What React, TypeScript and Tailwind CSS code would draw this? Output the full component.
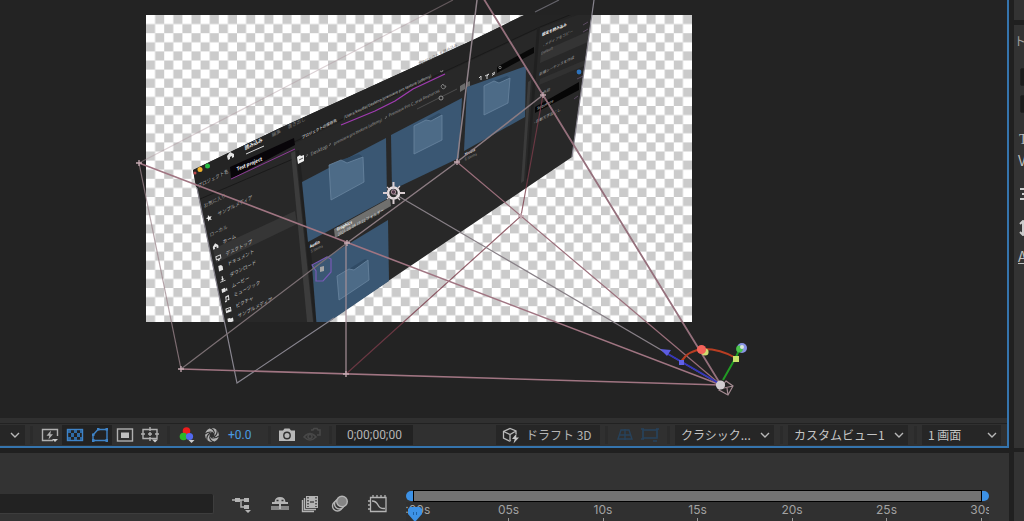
import React from "react";

type Pt = [number, number];
const pts = (p: Pt[]) => p.map((q) => q.join(",")).join(" ");

type SlantProps = { x: number; y: number; size?: number; fill?: string; bold?: boolean; slope?: number; lean?: number; children: string };

function Slant({ x, y, size = 5, fill = "#b4b4b4", bold, slope = -0.5, lean = 0.15, children }: SlantProps) {
  return (
    <text
      transform={`matrix(0.88 ${slope * 0.88} ${lean} 0.97 ${x} ${y})`}
      fontSize={size}
      fontWeight={bold ? 700 : 400}
      fill={fill}
    >
      {children}
    </text>
  );
}

const cells: Pt[][] = [
  [[302, 182], [386, 138], [387, 199], [308, 242]],
  [[391, 135], [462, 98], [459, 158], [392, 190]],
  [[467, 87], [526, 66], [525, 117], [464, 151]],
  [[312, 266], [388, 220], [389, 281], [317, 330]],
];

const folders: { notch: Pt[]; body: Pt[] }[] = [
  { notch: [[341, 160], [359, 154], [363, 157], [347, 163]], body: [[329, 165], [341, 160], [347, 163], [363, 157], [364, 182], [331, 200]] },
  { notch: [[426, 120], [439, 113], [442, 115], [431, 121]], body: [[414, 126], [426, 120], [431, 121], [442, 115], [442, 140], [414, 154]] },
  { notch: [[494, 81], [507, 76], [510, 78], [499, 83]], body: [[484, 86], [494, 81], [499, 83], [510, 78], [508, 103], [484, 115]] },
  { notch: [[349, 269], [365, 259], [368, 260], [354, 270]], body: [[337, 276], [349, 269], [354, 270], [368, 260], [369, 280], [339, 300]] },
];

const places: { label: string; x: number; y: number; icon: string }[] = [
  { label: "ホーム", x: 223, y: 243, icon: "M-3 0L0 -3L3 0V3H1V1H-1V3H-3Z" },
  { label: "デスクトップ", x: 226, y: 255, icon: "M-3 -3H3V1.5H1V3H-1V1.5H-3ZM-2 -2V.5H2V-2Z" },
  { label: "ドキュメント", x: 228, y: 265, icon: "M-2 -3H1L2.5 -1V3H-2Z" },
  { label: "ダウンロード", x: 230, y: 276, icon: "M-.6 -3H.6V0H2L0 2L-2 0H-.6ZM-3 2H3V3H-3Z" },
  { label: "ムービー", x: 232, y: 287, icon: "M-3 -2H1V0L3 -1.5V2L1 1V2H-3Z" },
  { label: "ミュージック", x: 234, y: 296, icon: "M-1 -3L3 -3.5V2H1V.5H2V-2L0 -1.5V3H-2V1.5H-1Z" },
  { label: "ピクチャ", x: 236, y: 307, icon: "M-3 -2.5H3V2.5H-3ZM-2 -1.5V.5L0 -.5L2 .5V-1.5Z" },
  { label: "サンプルメディア", x: 238, y: 317, icon: "M-3 -2.5H-.5L.5 -1.5H3V2.5H-3Z" },
];

function ImportWindow() {
  return (
    <g clipPath="url(#frame)">
      <polygon points="193,170 280,128 473,40 520,17 562,-2 594,-2 572,157 237,383" fill="#282828" />
      <polygon points="193,170 280,128 473,40 520,17 562,-2 594,-2 592,10 540,28 300,141 196,187" fill="#242424" />
      <path d="M196 186L296 141L540 27L592 6M200 199L300 156" stroke="#1a1a1a" fill="none" />
      <circle cx="195" cy="173" r="1.5" fill="#b9484a" />
      <circle cx="200" cy="169.5" r="2.5" fill="#f1b32d" />
      <circle cx="207.5" cy="166" r="2.5" fill="#2bbb43" />
      <path d="M227 156L230 152L234 154V157L232 158V156L230 157V159L228 160Z" fill="#e4e4e4" />
      <Slant x={245} y={150} fill="#eee" bold>読み込み</Slant>
      <path d="M246 154L264 146" stroke="#ddd" strokeWidth="1" />
      <Slant x={272} y={137} fill="#777">編集</Slant>
      <Slant x={288} y={129} fill="#777">書き出し</Slant>
      <Slant x={418} y={66} size={4} fill="#707070">プロジェクト を読み込み</Slant>

      <Slant x={198} y={188}>プロジェクト名</Slant>
      <polygon points="230,167 294,138 295,145 231,179" fill="#080509" />
      <path d="M231 179L295 149" stroke="#8d3b96" strokeWidth="1" />
      <Slant x={237} y={171} fill="#fff" bold slope={-0.42}>Test project</Slant>
      <Slant x={302} y={139} size={4} bold>プロジェクトの保存先</Slant>
      <Slant x={344} y={119} size={4} fill="#c9c9c9" slope={-0.48}>/Users/koudai/Desktop/premiere pro texture (udemy)</Slant>
      <path d="M341 125L375 111L395 101L413 89L445 74" fill="none" stroke="#a03bb0" strokeWidth="1.300" />
      <path d="M440 71L442 72L443 70" fill="none" stroke="#999" strokeWidth=".8" />

      <polygon points="213,249 295,211 297,224 216,263" fill="#363636" />
      <polygon points="291,153 295,151 314,330 308,332" fill="#3c3c3c" />
      <polygon points="296,151 299,150 320,330 315,332" fill="#202020" />
      <Slant x={204} y={208} fill="#999">お気に入り</Slant>
      <path transform="translate(209 218) rotate(-20) scale(.9)" d="M0 -3.500L1 -1L3.500 -1L1.500 .7L2.200 3.300L0 1.800L-2.200 3.300L-1.500 .7L-3.500 -1H-1Z" fill="#eee" />
      <Slant x={218} y={216}>サンプルメディア</Slant>
      <Slant x={210} y={237} fill="#999">ローカル</Slant>
      {places.map((p) => (
        <g key={p.y}>
          <path transform={`matrix(0.9 -0.36 0.14 0.9 ${p.x - 7.5} ${p.y + 3})`} d={p.icon} fill="#e4e4e4" fillRule="evenodd" />
          <Slant x={p.x} y={p.y + 1} fill="#c4c4c4">{p.label}</Slant>
        </g>
      ))}

      <path d="M297 157L300 155L301 156L304 155V161L298 164Z" fill="#f0f0f0" />
      <path d="M299 160L303 158" stroke="#555" strokeWidth="1" />
      <path d="M306 157L307.500 155L307 154M329 146L330.500 144L330 143M385 119L386.500 117L386 116" stroke="#888" strokeWidth=".7" fill="none" />
      <Slant x={311} y={156} fill="#999">Desktop</Slant>
      <Slant x={334} y={145} size={4} fill="#a4a4a4">premiere pro texture (udemy)</Slant>
      <Slant x={389} y={117} size={4} fill="#a4a4a4">Premiere Pro C_ersa Resources</Slant>
      <path d="M417 109L457 89" stroke="#4c4c4c" />
      <circle cx="441" cy="98" r="2" fill="#282828" stroke="#aaa" strokeWidth=".8" />
      <path d="M443 84L444 86L446 86L445 88L443 89L441.500 87.500L441 86Z" stroke="#999" strokeWidth=".7" fill="none" />
      <path d="M460 86L465 83V89L460 92ZM466 83L470 81V86L466 88Z" fill="#6c6c6c" />
      <path d="M479 78L481 76V80M485 76L489 74L487 76V79M492 74L495 72M492 75.500L495 73.500" stroke="#ccc" strokeWidth="1" fill="none" />
      <polygon points="497,67 534,47 534,53 497,73" fill="#080808" />
      <circle cx="500" cy="67.5" r="1.200" stroke="#bbb" strokeWidth=".6" fill="none" />

      {cells.map((c, i) => <polygon key={i} points={pts(c)} fill="#3a5773" />)}
      {folders.map((f, i) => (
        <g key={i}>
          <polygon points={pts(f.notch)} fill="#304b65" />
          <polygon points={pts(f.body)} fill="#4d6b87" stroke="#6985a0" strokeWidth=".8" strokeLinejoin="round" />
        </g>
      ))}
      <Slant x={310} y={248} size={4} fill="#fff" bold>Audio</Slant>
      <Slant x={311} y={253} size={4} fill="#888">5 items</Slant>
      <polygon points="334,229 390,198 391,206 335,238" fill="#70706e" />
      <Slant x={337} y={231} size={4} fill="#fff" bold>Graphics</Slant>
      <Slant x={338} y={236} size={4} fill="#ddd" slope={-0.54}>2021-08-04 19:22 フォルダー</Slant>
      <Slant x={465} y={156} size={4} fill="#ddd" bold>Media</Slant>
      <Slant x={465} y={161} size={4} fill="#888">6 items</Slant>
      <path d="M312 265L327 257L331 259L331 272L323 281L316 281L316 271Z" fill="none" stroke="#7759b5" strokeWidth="1.200" />
      <path d="M320 267L324 266V271L320 272Z" fill="#a5a5a5" />

      <polygon points="528,82 531,80 524,181 521,183" fill="#3b3b3b" />
      <polygon points="533,78 537,28 540,27 536,78 528,178 526,179" fill="#202020" />
      <Slant x={542} y={36} size={4} fill="#fff" bold slope={-0.42} lean={-0.1}>設定を読み込み</Slant>
      <Slant x={543} y={47} size={4} fill="#999" lean={-0.1}>› メディアをコピー</Slant>
      <polygon points="541,52 589,31 588,42 540,63" fill="#343434" />
      <Slant x={541} y={55} size={4} fill="#888" lean={-0.1}>Default</Slant>
      <Slant x={539} y={76} size={4} fill="#aaa" lean={-0.1}>新規シーケンスを作成</Slant>
      <polygon points="540,79 585,60 584,66 539,85" fill="#313131" />
      <circle cx="579" cy="72" r="2.400" fill="#2d73bd" />
      <Slant x={543} y={94} size={4} fill="#999" lean={-0.1}>名前</Slant>
      <polygon points="535,107 579,82 579,90 535,113" fill="#060606" />
      <Slant x={537} y={110} size={4} fill="#ddd" lean={-0.1}>Sequence</Slant>
      <Slant x={534} y={124} size={4} fill="#aaa" lean={-0.1}>› 自動文字起こし</Slant>
      <path d="M583 25L588 22M583 32L588 29M577 79L583 76M574 99L578 96" stroke="#5a4a60" />
    </g>
  );
}

function Stage() {
  return (
    <svg viewBox="0 0 1007 418" preserveAspectRatio="xMinYMin slice" className="block h-full w-full" role="img" aria-label="コンポジション">
      <defs>
        <pattern id="checker" x="146" y="15" width="18.200" height="18.200" patternUnits="userSpaceOnUse">
          <rect width="18.200" height="18.200" fill="#fff" />
          <path d="M9.100 0H18.200V9.100H9.100ZM0 9.100H9.100V18.200H0Z" fill="#cbcbcb" />
        </pattern>
        <clipPath id="frame"><rect x="146" y="15" width="546" height="307" /></clipPath>
      </defs>
      <rect x="146" y="15" width="546" height="307" fill="url(#checker)" />
      <ImportWindow />

      <g fill="none" stroke="#88858f" strokeWidth="1.200">
        <path d="M197 188L237 383L334 318" />
        <path d="M594 0L572 157" />
        <path d="M535 12L559 0" stroke="#65646b" />
      </g>
      <g fill="none" strokeWidth="1.200">
        <path d="M139 163L453 0" stroke="#b09aa0" opacity=".45" />
        <path d="M139 163L181 369" stroke="#9c858c" opacity=".75" />
        <path d="M181 369L347 243" stroke="#7c7074" />
        <path d="M347 243L457 162L543 95" stroke="#8c7c82" strokeWidth="1.500" />
        <path d="M346 243V374" stroke="#a58f97" />
        <path d="M457 162L477 0" stroke="#8f8289" strokeWidth="1.500" />
        <path d="M543 95L521 216L346 374" stroke="#7b3c4a" opacity=".8" />
        <path d="M393 193L721 385" stroke="#888087" />
        <path d="M457 162L721 385" stroke="#9b6f7b" />
        <path d="M482 -4L543 95L721 385" stroke="#95707c" strokeWidth="1.800" />
        <path d="M139 163L721 385" stroke="#a07582" strokeWidth="1.600" />
        <path d="M181 369L721 385" stroke="#a07582" strokeWidth="1.600" />
      </g>
      <path d="M136 163H142M139 160V166M178 369H184M181 366V372M343 374H349M346 371V377M344 243H350M347 240V246M454 162H460M457 159V165M540 95H546M543 92V98M518 216H524M521 213V219" stroke="#c5a9b1" strokeWidth="1.300" />

      <g>
        <circle cx="393.500" cy="193" r="5.500" fill="none" stroke="#e6dde0" strokeWidth="2.600" />
        <circle cx="393.500" cy="192" r="2.200" fill="#51394a" stroke="#c7a5b0" strokeWidth=".8" />
        <path d="M393.500 182V188M393.500 198V204M383 193H388M399 193H405" stroke="#d9cdd1" strokeWidth="2" />
        <path d="M387 187L390 190M397 189L400 186M387 199L390 196M397 197L400 200" stroke="#d9cdd1" strokeWidth="1.200" />
      </g>

      <g fill="none" strokeWidth="2">
        <path d="M720 384L668 354" stroke="#3435bd" />
        <path d="M681 362Q688 350 704 349Q720 349 736 358" stroke="#b83d22" />
        <path d="M723 380L736 357L740 348" stroke="#229b24" />
      </g>
      <path d="M660 349L671 350L667 356Z" fill="#5c5ce0" />
      <rect x="679" y="360" width="5" height="5" fill="#6061e6" />
      <circle cx="705" cy="352" r="3.600" fill="#cfdb70" />
      <circle cx="701.500" cy="349.500" r="4.600" fill="#f46259" />
      <circle cx="742" cy="348" r="5" fill="#8893e4" />
      <circle cx="739.500" cy="349" r="3.400" fill="#4bc34b" />
      <circle cx="742" cy="347" r="2" fill="#dbe6dd" />
      <rect x="733" y="356" width="6" height="6" fill="#c8e46b" />
      <path d="M726 381L733 386L728 395L719 390L726 381ZM733 386L724 388M728 395L727 388" fill="none" stroke="#a48b92" strokeWidth="1.200" />
      <circle cx="720.500" cy="385" r="4.600" fill="#d0cdd0" />
    </svg>
  );
}

function Chevron() {
  return (
    <svg viewBox="0 0 10 6" className="pointer-events-none h-[6px] w-[10px] shrink-0" fill="none" stroke="#b8b8b8" strokeWidth="1.400">
      <path d="M1 1L5 5L9 1" />
    </svg>
  );
}

const Sep = () => <span className="h-[18px] w-[3px] shrink-0 bg-[#2b2b2b]" />;

function Tool({ label, on, children }: { label: string; on?: boolean; children: React.ReactNode }) {
  return (
    <button aria-label={label} className={"flex h-5 w-[25px] shrink-0 items-center justify-center " + (on ? "bg-[#222]" : "")}>
      <svg viewBox="0 0 20 18" className="h-[18px] w-5" fill="none" stroke={on ? "#3f83c7" : "#b0b0b0"} strokeWidth="1.400">
        {children}
      </svg>
    </button>
  );
}

function Picker({ label, value, options, className }: { label: string; value: string; options: string[]; className: string }) {
  return (
    <label className={"grid h-5 items-center bg-[#262626] " + className}>
      <select aria-label={label} defaultValue={value} className="col-start-1 row-start-1 h-5 w-full cursor-pointer appearance-none bg-transparent pl-[6px] pr-5 text-[12px] leading-5 text-[#c4c4c4] outline-none">
        {options.map((o) => <option key={o}>{o}</option>)}
      </select>
      <span className="pointer-events-none col-start-1 row-start-1 justify-self-end pr-[4px]"><Chevron /></span>
    </label>
  );
}

function ViewerBar() {
  return (
    <div className="flex h-[30px] shrink-0 flex-col border-b-2 border-[#3574ad] bg-[#303030] pt-[5px]">
      <div className="flex min-h-0 flex-1 items-center justify-between border-t border-[#222] pr-[6px]">
        <div className="flex items-center">
          <button aria-label="拡大率" className="flex h-5 w-[25px] items-center justify-end bg-[#262626] pr-[5px]"><Chevron /></button>
          <span className="flex w-3 justify-center"><Sep /></span>
          <Tool label="高速プレビュー">
            <path d="M13 14.500H2.500V3.500H17.500V10" />
            <path d="M11 4.500L6.500 9.700H9.300L8.500 13.500L13 8.300H10.300Z" fill="#b0b0b0" stroke="none" />
            <path d="M12 13H18L15 16Z" fill="#ccc" stroke="none" />
          </Tool>
          <Tool label="透明グリッド" on>
            <rect x="2.500" y="3.500" width="15" height="11" />
            <path d="M3 4H6V7H3ZM9 4H12V7H9ZM6 7H9V11H6ZM12 7H15V11H12ZM3 11H6V14H3ZM9 11H12V14H9ZM15 4H17V7H15ZM15 11H17V14H15Z" fill="#2f6ba6" stroke="none" />
          </Tool>
          <Tool label="マスクとシェイプのパス" on>
            <path d="M3 14.500V9L8 3.500H17V14.500Z" />
            <path d="M2 13H4.500V16H2ZM2 7.500H4.500V10H2ZM7 2H9.500V4.500H7ZM15.500 2H18V4.500H15.500ZM15.500 13H18V16H15.500Z" fill="#3f83c7" stroke="none" />
          </Tool>
          <Tool label="目標範囲">
            <rect x="2.500" y="3" width="15" height="12" />
            <rect x="6" y="6.500" width="8" height="5.500" fill="#c0c0c0" stroke="none" />
          </Tool>
          <Tool label="グリッドとガイド">
            <path d="M3 3.500H17V12.500H3ZM10 1V5M10 11V15M1 8H5M15 8H19M8 8H12M10 6V10" />
            <path d="M12 13.500H18L15 16.500Z" fill="#ccc" stroke="none" />
          </Tool>
          <span className="flex w-3 justify-center"><Sep /></span>
          <Tool label="チャンネル">
            <g stroke="none">
              <circle cx="9.500" cy="5" r="3.800" fill="#ed1c1c" />
              <circle cx="6.500" cy="10.500" r="3.800" fill="#29b629" />
              <circle cx="12.500" cy="10.500" r="3.600" fill="#5269f0" />
              <path d="M11.500 14H17.500L14.500 17Z" fill="#ccc" />
            </g>
          </Tool>
          <Tool label="露出をリセット">
            <circle cx="10" cy="9" r="4.700" strokeWidth="4.400" />
            <path d="M8 2Q12 3 12.500 7.500M15 3.500Q16 8 12 11M17 10Q13 13 9 11.500M12 16Q8 15 7.500 10.500M5 14.500Q4 10 8 7M3 8Q7 5 11 6.500" stroke="#303030" strokeWidth="1.100" />
          </Tool>
          <button aria-label="露出を調整" className="flex h-5 w-10 items-center pl-1 text-[12px] text-[#4a9be0] [font-family:Roboto,sans-serif]">+0.0</button>
          <span className="flex w-[10px] justify-center"><Sep /></span>
          <Tool label="スナップショットを撮る">
            <path d="M2 4.500H6L7.500 2.500H12.500L14 4.500H18V15H2Z" fill="#b8b8b8" stroke="none" />
            <circle cx="10" cy="9.500" r="3.200" stroke="#303030" />
          </Tool>
          <Tool label="スナップショットを表示">
            <g stroke="#484848" strokeWidth="1.600">
              <path d="M2 11Q8 4 14 11Q8 17 2 11Z" />
              <circle cx="8" cy="10.500" r="2" />
              <path d="M9 4H11L12 2.500H15L16 4H18V9H15" />
            </g>
          </Tool>
          <span className="flex w-3 justify-center"><Sep /></span>
          <button aria-label="現在の時間" className="h-5 w-[77px] bg-[#222] text-center text-[12px] text-[#b4b4b4] [font-family:Roboto,sans-serif]">0;00;00;00</button>
        </div>

        <div className="flex items-center">
          <button className="flex h-5 w-[104px] items-center gap-[6px] bg-[#262626] pl-[6px] text-[12px] whitespace-nowrap text-[#b4b4b4]">
            <svg viewBox="0 0 18 18" className="h-[18px] w-[18px]" fill="none" stroke="#b8b8b8" strokeWidth="1.300">
              <path d="M9 14.500L7.500 15L1.500 12V5.500L8 2.500L14 5V8M1.500 5.500L8 8.500L14 5M8 8.500V14" />
              <path d="M14.500 7.500L10 13H12.700L11.500 17.500L17 11.500H14.200Z" fill="#c4c4c4" stroke="none" />
            </svg>
            ドラフト 3D
          </button>
          <span className="flex w-3 justify-center"><Sep /></span>
          <Tool label="3D グラウンドプレーン">
            <path d="M6 4H14L17 13H3ZM10 3V14M4 9H16" stroke="#27425b" />
          </Tool>
          <Tool label="拡張ビューア">
            <path d="M3 4H17V12H3ZM1 3H4M16 3H19M1 13H4M13 15H17" stroke="#27425b" strokeWidth="1.700" />
          </Tool>
          <span className="flex w-[13px] justify-center"><Sep /></span>
          <Picker label="3D レンダラー" value="クラシック..." options={["クラシック...", "Cinema 4D"]} className="w-[99px]" />
          <span className="flex w-[14px] justify-center"><Sep /></span>
          <Picker label="3D ビュー" value="カスタムビュー1" options={["カスタムビュー1", "カスタムビュー2"]} className="w-[120px]" />
          <span className="flex w-[14px] justify-center"><Sep /></span>
          <Picker label="ビューのレイアウト" value="1 画面" options={["1 画面", "2 画面"]} className="w-[79px]" />
        </div>
      </div>
    </div>
  );
}

function TimelineTool({ label, className, children }: { label: string; className: string; children: React.ReactNode }) {
  return (
    <button aria-label={label} className={"flex h-5 w-5 shrink-0 items-center justify-center " + className}>
      <svg viewBox="0 0 20 20" className="h-5 w-5" fill="none" stroke="#b4b4b4" strokeWidth="1.400">{children}</svg>
    </button>
  );
}

const marks = ["0:00s", "05s", "10s", "15s", "20s", "25s", "30s"];

function Timeline() {
  return (
    <div className="flex h-[68px] shrink-0 bg-[#333] pt-[37px] pr-5">
      <div className="flex w-[406px] shrink-0 items-start pt-1">
        <input aria-label="検索" className="h-5 w-[214px] rounded-r-[2px] border-0 border-r border-b border-[#3d3d3d] bg-[#222] px-2 text-[12px] text-[#ccc] outline-none" />
        <TimelineTool label="ミニフローチャート" className="ml-[18px]">
          <path d="M0 6H14M9 6V13H14" />
          <path d="M3 4H8V8H3ZM12 4H17V8H12ZM12 11H17V15H12ZM13 16H19L16 19Z" fill="#b4b4b4" stroke="none" />
        </TimelineTool>
        <TimelineTool label="シャイレイヤー" className="ml-[18px]">
          <path d="M1 12H19V16H1Z" fill="#858585" stroke="none" />
          <path d="M4.500 8Q5 3 10 3Q15 3 15.500 8Z" fill="#b4b4b4" stroke="none" />
          <path d="M2 9H18M10 8V15" strokeWidth="2" />
          <path d="M6.500 6.500H8.500M11.500 6.500H13.500" stroke="#333" />
        </TimelineTool>
        <TimelineTool label="フレームブレンド" className="ml-[10px]">
          <path d="M2.500 6V17.500H14M4.500 4V15.500H16" />
          <path d="M6 2H18V14H6Z" fill="#b4b4b4" stroke="none" />
          <path d="M8 3V13M16 3V13" stroke="#333" strokeDasharray="1.500 1.500" />
          <path d="M10 8H14" stroke="#444" />
        </TimelineTool>
        <TimelineTool label="モーションブラー" className="ml-[10px]">
          <circle cx="7.500" cy="12" r="5" fill="#333" />
          <circle cx="9.500" cy="10" r="5" fill="#333" />
          <circle cx="12" cy="7.500" r="5.300" fill="#858585" />
        </TimelineTool>
        <TimelineTool label="グラフエディター" className="ml-[18px]">
          <path d="M2.500 3.500H18V17.500H2.500ZM5 1V3M9 1V3M13 1V3M17 1V3M0 7H2M0 11H2M0 15H2" strokeWidth="1.300" />
          <path d="M4 7Q8 7 10 11Q12 15 17 14.500" />
        </TimelineTool>
      </div>
      <div className="relative min-w-0 flex-1 overflow-hidden">
        <div className="flex h-3 items-center">
          <span className="h-[10px] w-[7px] rounded-l-full bg-[#3d92e6]" />
          <span className="h-3 flex-1 border border-black bg-[#737373]" />
          <span className="h-[10px] w-[7px] rounded-r-full bg-[#3d92e6]" />
        </div>
        <div className="flex h-[19px] justify-between bg-[#303030] px-2">
          {marks.map((m) => (
            <span key={m} className="flex w-0 flex-col items-center text-[12px] leading-4 text-[#a2a2a2] [font-family:Inter,sans-serif]">
              {m}
              <span className="h-[3px] w-px shrink-0 bg-[#999]" />
            </span>
          ))}
        </div>
        <svg viewBox="0 0 14 15" className="absolute top-[17px] left-[2px] h-[15px] w-[14px]" aria-hidden="true">
          <path d="M2 0H12L14 2V7L7 15L0 7V2Z" fill="#3d92e6" />
          <path d="M5.500 5V8M8.500 5V8" stroke="#1e62a5" />
        </svg>
      </div>
    </div>
  );
}

function SidePanel() {
  return (
    <aside className="flex w-[10px] shrink-0 flex-col overflow-hidden bg-[#202020]">
      <div className="h-5 shrink-0 bg-[#333]" />
      <div className="mt-[5px] flex min-h-0 flex-1 flex-col overflow-hidden bg-[#333] whitespace-nowrap text-[#bdbdbd]">
        <span className="pt-[6px] text-[12px] leading-5 text-[#a0a0a0]">ト</span>
        <span className="mt-[17px] ml-[6px] h-[18px] w-10 shrink-0 rounded-[2px] border border-[#222] bg-[#1c1c1c]" />
        <span className="mt-[9px] ml-[6px] h-[18px] w-10 shrink-0 rounded-[2px] border border-[#222] bg-[#1c1c1c]" />
        <span className="mt-[17px] ml-[5px] text-[14px] leading-5 [font-family:'Liberation_Serif',serif]">T</span>
        <span className="ml-[4px] text-[14px] leading-5">V</span>
        <svg viewBox="0 0 14 16" className="mt-[16px] ml-[6px] h-4 w-[14px] shrink-0"><path d="M0 3H14M2 8H14M0 13H14" stroke="#ccc" strokeWidth="2" /></svg>
        <svg viewBox="0 0 14 16" className="mt-[18px] ml-[5px] h-4 w-[14px] shrink-0"><path d="M4 1V15M1 4L4 1L7 4M1 12L4 15L7 12" stroke="#ccc" strokeWidth="2" fill="none" /></svg>
        <span className="mt-[10px] ml-[4px] text-[14px] leading-5 underline">A</span>
      </div>
      <div className="mt-1 h-[69px] shrink-0 bg-[#333]" />
    </aside>
  );
}

export default function App() {
  return (
    <div className="flex h-screen w-full overflow-hidden bg-[#202020] [font-family:'Noto_Sans_CJK_JP',sans-serif]">
      <main className="flex min-w-0 flex-1 flex-col pr-[5px]">
        <section className="flex min-h-0 flex-1 flex-col border-r-2 border-[#3574ad] bg-[#232323]">
          <div className="min-h-0 flex-1 overflow-hidden"><Stage /></div>
          <ViewerBar />
        </section>
        <div className="h-[5px] shrink-0 bg-[#202020]" />
        <Timeline />
      </main>
      <SidePanel />
    </div>
  );
}
